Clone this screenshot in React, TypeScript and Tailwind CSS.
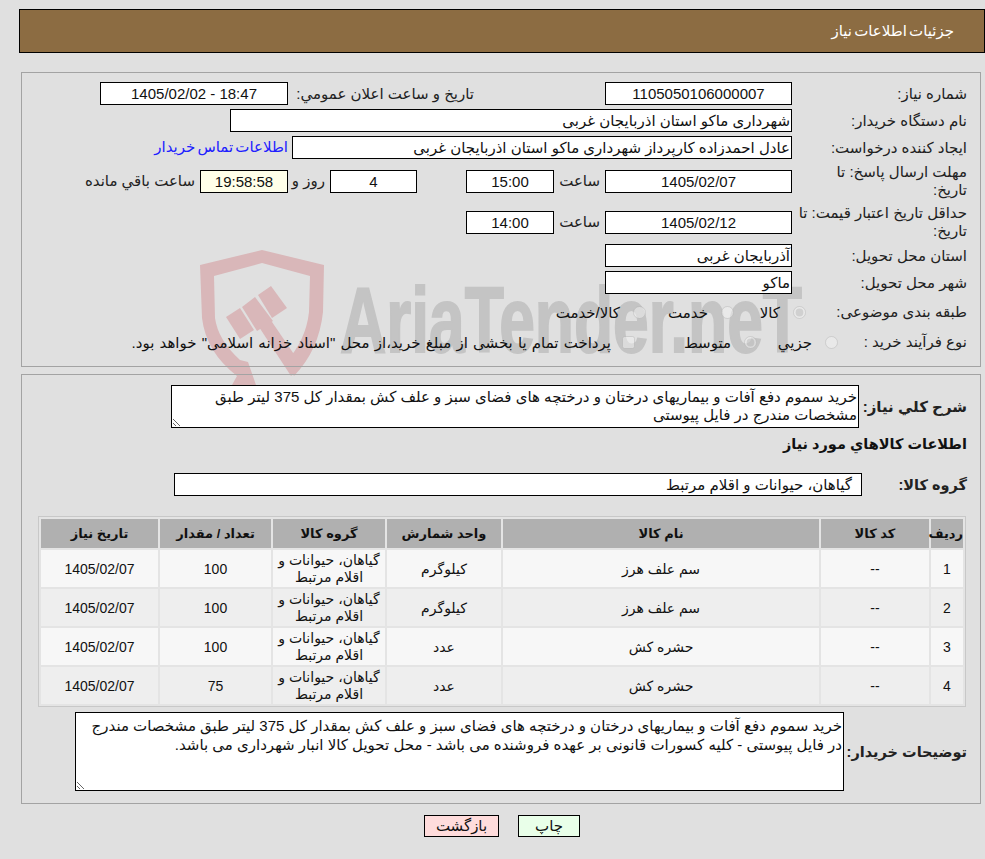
const font = '[font-family:"Liberation_Sans","DejaVu_Sans",sans-serif]';

const Field = ({ className, children }: { className: string; children?: React.ReactNode }) => (
  <div className={`h-[23px] shrink-0 border border-black bg-white leading-[21px] whitespace-nowrap overflow-hidden ${className}`}>
    {children}
  </div>
);

const Label = ({ className = 'w-[175px]', children }: { className?: string; children: React.ReactNode }) => (
  <div className={`shrink-0 leading-[18px] text-[#222] ${className}`}>{children}</div>
);

const Radio = ({ checked, width, text }: { checked?: boolean; width: string; text: string }) => (
  <label className={`flex items-center gap-[13px] shrink-0 ${width}`}>
    <input type="radio" disabled checked={!!checked} readOnly className="m-0 size-[13px] opacity-70" />
    <span className="mt-[2px]">{text}</span>
  </label>
);

const rows = [
  { id: 1, name: 'سم علف هرز', unit: 'کیلوگرم', qty: '100' },
  { id: 2, name: 'سم علف هرز', unit: 'کیلوگرم', qty: '100' },
  { id: 3, name: 'حشره کش', unit: 'عدد', qty: '100' },
  { id: 4, name: 'حشره کش', unit: 'عدد', qty: '75' },
];

const summary =
  'خرید سموم دفع آفات و بیماریهای درختان و درختچه های فضای سبز و علف کش بمقدار کل 375 لیتر طبق مشخصات مندرج در فایل پیوستی';

export default function App() {
  return (
    <div dir="rtl" className={`relative min-h-[859px] overflow-hidden bg-[#e0e0e0] pt-[9px] text-[15px] text-[#111] ${font}`}>
      {/* watermark */}
      <svg className="absolute left-0 top-0 pointer-events-none [direction:ltr]" width="985" height="859" viewBox="0 0 985 859">
        <path
          fill="#d9b7b9"
          d="M200 265 L262 250 L324 265 L323 312 Q319 350 294 376 L286 362 Q306 340 309 312 L310 276 L262 263 L214 276 L215 318 Q218 340 240 360 L248 362 L257 388 L232 385 L237 376 Q206 352 202 318 Z"
        />
        <polygon fill="#d9b7b9" points="226,317 240,308 254,330 240,339" />
        <polygon fill="#d9b7b9" points="242,307 255,297 273,321 257,331" />
        <polygon fill="#d9b7b9" points="258,295 271,286 287,308 272,318" />
        <polygon fill="#d9b7b9" points="259,327 270,319 302,366 291,376" />
        <text
          x="340"
          y="352"
          fontSize="92"
          fontWeight="700"
          fill="#c4c4c4"
          stroke="#c4c4c4"
          strokeWidth="2"
          textLength="462"
          lengthAdjust="spacingAndGlyphs"
          fontFamily="Liberation Sans, sans-serif"
          className="[direction:ltr]"
        >
          AriaTender.neT
        </text>
      </svg>

      <div className="relative mr-0 ml-[19px] flex h-[44px] items-center border border-black bg-[#8c6c42] pr-[30px] text-white [word-spacing:-2px]">
        جزئیات اطلاعات نیاز
      </div>

      {/* need details */}
      <div className="relative mt-[19px] ml-[21px] mr-[4px] h-[295px] border border-[#a3a3a3] pt-[9px] pr-[13px]">
        <div className="flex items-center">
          <Label>شماره نیاز:</Label>
          <Field className="w-[187px] text-center">1105050106000007</Field>
          <Label className="w-[317px] pr-[131px]">تاریخ و ساعت اعلان عمومي:</Label>
          <Field className="w-[188px] text-center">18:47 - 1405/02/02</Field>
        </div>
        <div className="mt-[4px] flex items-center">
          <Label>نام دستگاه خریدار:</Label>
          <Field className="w-[562px] pr-[1px]">شهرداری ماکو استان اذربایجان غربی</Field>
        </div>
        <div className="mt-[4px] flex items-center">
          <Label>ایجاد کننده درخواست:</Label>
          <Field className="w-[500px] pr-[1px]">عادل احمدزاده کارپرداز شهرداری ماکو استان اذربایجان غربی</Field>
          <a href="#" className="mr-[4px] text-[#2020ff] whitespace-nowrap [word-spacing:-2px]">اطلاعات تماس خریدار</a>
        </div>
        <div className="mt-[4px] flex h-[36px] items-center">
          <Label className="w-[175px] pl-[30px]">مهلت ارسال پاسخ: تا تاریخ:</Label>
          <Field className="w-[187px] text-center">1405/02/07</Field>
          <Label className="w-[51px] pr-[5px]">ساعت</Label>
          <Field className="w-[88px] text-center">15:00</Field>
          <div className="w-[49px] shrink-0" />
          <Field className="w-[87px] text-center">4</Field>
          <Label className="w-[42px] pr-[5px]">روز و</Label>
          <Field className="w-[88px] !bg-[#ffffe9] text-center">19:58:58</Field>
          <Label className="pr-[5px] whitespace-nowrap">ساعت باقي مانده</Label>
        </div>
        <div className="mt-[5px] flex h-[36px] items-center">
          <Label>حداقل تاریخ اعتبار قیمت: تا تاریخ:</Label>
          <Field className="w-[187px] text-center">1405/02/12</Field>
          <Label className="w-[51px] pr-[5px]">ساعت</Label>
          <Field className="w-[88px] text-center">14:00</Field>
        </div>
        <div className="mt-[4px] flex items-center">
          <Label>استان محل تحویل:</Label>
          <Field className="w-[187px] pr-[1px]">آذربایجان غربی</Field>
        </div>
        <div className="mt-[4px] flex items-center">
          <Label>شهر محل تحویل:</Label>
          <Field className="w-[187px] pr-[1px]">ماکو</Field>
        </div>
        <div className="mt-[8px] flex h-[20px] items-center">
          <Label className="w-[161px]">طبقه بندی موضوعی:</Label>
          <Radio checked width="w-[72px]" text="کالا" />
          <Radio width="w-[88px]" text="خدمت" />
          <Radio width="w-[100px]" text="کالا/خدمت" />
        </div>
        <div className="mt-[10px] flex h-[20px] items-center">
          <Label className="w-[129px]">نوع فرآیند خرید :</Label>
          <Radio width="w-[81px]" text="جزيي" />
          <Radio checked width="w-[122px]" text="متوسط" />
          <input type="checkbox" disabled className="m-0 size-[13px] opacity-70" />
          <span className="mr-[11px] mt-[2px] whitespace-nowrap [word-spacing:1px]">پرداخت تمام یا بخشی از مبلغ خرید،از محل "اسناد خزانه اسلامی" خواهد بود.</span>
        </div>
      </div>

      {/* goods */}
      <div className="relative mt-[7px] ml-[21px] mr-[4px] h-[430px] border border-[#a3a3a3] pr-[13px]">
        <div className="mt-[10px] flex items-center">
          <Label className="w-[108px] font-bold">شرح كلي نياز:</Label>
          <textarea
            readOnly
            value={summary}
            dir="rtl"
            className="block h-[43px] w-[688px] shrink-0 border border-black bg-white px-[1px] pt-[2px] text-[15px] leading-[18px] text-[#111]"
          />
        </div>
        <div className="mt-[6px] h-[20px] text-[14.5px] font-bold leading-[20px]">اطلاعات كالاهاي مورد نياز</div>
        <div className="mt-[19px] flex items-center">
          <Label className="w-[105px] text-[14.5px] font-bold">گروه کالا:</Label>
          <Field className="w-[688px] pr-[9px]">گیاهان، حیوانات و اقلام مرتبط</Field>
        </div>

        <table className="mt-[20px] mr-[1px] w-[928px] table-fixed border-separate border-spacing-[2px] border border-[#c8c8c8] bg-[#e4e4e4] text-center text-[14px]">
          <colgroup>
            <col className="w-[32px]" />
            <col className="w-[108px]" />
            <col className="w-[316px]" />
            <col className="w-[114px]" />
            <col className="w-[112px]" />
            <col className="w-[111px]" />
            <col />
          </colgroup>
          <thead>
            <tr className="h-[29px] bg-[#b0b0b0] text-[13px] font-bold text-[#111]">
              <th className="whitespace-nowrap">ردیف</th>
              <th>کد کالا</th>
              <th>نام کالا</th>
              <th>واحد شمارش</th>
              <th>گروه کالا</th>
              <th>تعداد / مقدار</th>
              <th>تاریخ نیاز</th>
            </tr>
          </thead>
          <tbody>
            {rows.map((r) => (
              <tr key={r.id} className={`h-[37px] ${r.id % 2 ? 'bg-[#f7f7f7]' : 'bg-[#eeeeee]'}`}>
                <td className="pt-[2px]">{r.id}</td>
                <td className="pt-[2px]">--</td>
                <td className="pt-[2px]">{r.name}</td>
                <td className="pt-[2px]">{r.unit}</td>
                <td className="px-[4px] leading-[17px]">گیاهان، حیوانات و اقلام مرتبط</td>
                <td className="pt-[2px]">{r.qty}</td>
                <td className="pt-[2px]">1405/02/07</td>
              </tr>
            ))}
          </tbody>
        </table>

        <div className="mt-[5px] flex items-center">
          <Label className="w-[123px] whitespace-nowrap text-[14.5px] font-bold">توضیحات خریدار:</Label>
          <textarea
            readOnly
            value={`${summary} - کلیه کسورات قانونی بر عهده فروشنده می باشد - محل تحویل کالا انبار شهرداری می باشد.`}
            dir="rtl"
            className="block h-[79px] w-[769px] shrink-0 border border-black bg-white px-[1px] pt-[3px] text-[15px] leading-[19px] text-[#111]"
          />
        </div>
      </div>

      <div className="relative mt-[11px] flex justify-center gap-[19px] pl-[19px]">
        <button className="h-[22px] w-[62px] border border-black bg-[#e9ffe9] text-[15px] leading-[20px]">چاپ</button>
        <button className="h-[22px] w-[75px] border border-black bg-[#ffdcdc] text-[15px] leading-[20px]">بازگشت</button>
      </div>
    </div>
  );
}
